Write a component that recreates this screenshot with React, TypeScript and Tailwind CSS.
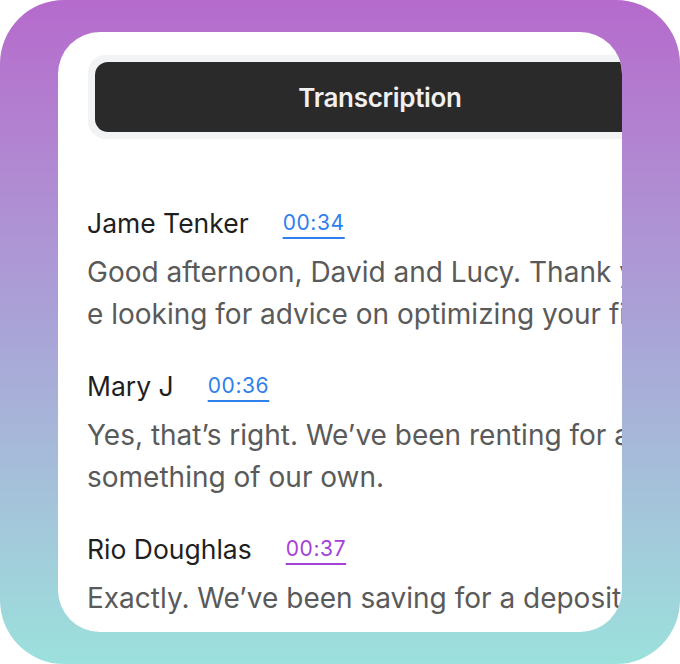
import React from "react";

type Entry = {
  name: string;
  time: string;
  timeClass: string;
  lines: string[];
};

const entries: Entry[] = [
  {
    name: "Jame Tenker",
    time: "00:34",
    timeClass: "text-[#2f80ed] decoration-[#2f80ed]",
    lines: [
      "Good afternoon, David and Lucy. Thank you for coming in today.",
      "e looking for advice on optimizing your finances and planning ahead.",
    ],
  },
  {
    name: "Mary J",
    time: "00:36",
    timeClass: "text-[#2f80ed] decoration-[#2f80ed]",
    lines: [
      "Yes, that\u2019s right. We\u2019ve been renting for a while now and want",
      "something of our own.",
    ],
  },
  {
    name: "Rio Doughlas",
    time: "00:37",
    timeClass: "text-[#a442d8] decoration-[#a442d8]",
    lines: ["Exactly. We\u2019ve been saving for a deposit for a couple of years."],
  },
];

export default function App() {
  return (
    <div className="w-[680px] h-[664px] bg-white">
      <div
        className="w-[680px] h-[664px] rounded-[64px] bg-gradient-to-b from-[#b56acc] via-[#a9a4d7] to-[#9be1dc] px-[58px] py-[32px]"
        style={{ fontFamily: "Inter, 'Noto Sans', sans-serif" }}
      >
        <div className="w-[564px] h-[600px] rounded-[42px] bg-white overflow-hidden">
          <div className="pt-[23px] pl-[30px]">
            <div className="w-[584px] shrink-0 rounded-[18px] bg-[#f1f3f5] p-[7px]">
              <div className="h-[70px] rounded-[13px] bg-[#2a2a2a] flex items-center justify-center">
                <span className="text-[26px] font-semibold text-[#f0f0f0] tracking-[-0.3px]">
                  Transcription
                </span>
              </div>
            </div>
          </div>
          <div className="pl-[29px] pt-[67px] flex flex-col gap-[34px]">
            {entries.map((e) => (
              <div key={e.name} className="flex flex-col">
                <div className="flex items-center gap-[34px] h-[34px] mb-[11px]">
                  <span className="text-[26.5px] leading-[34px] text-[#1f1f1f] whitespace-nowrap">
                    {e.name}
                  </span>
                  <span
                    className={`text-[21px] leading-[34px] tracking-[0.6px] underline decoration-2 underline-offset-[7px] whitespace-nowrap ${e.timeClass}`}
                  >
                    {e.time}
                  </span>
                </div>
                {e.lines.map((l, i) => (
                  <div
                    key={i}
                    className="text-[28px] leading-[42px] text-[#5a5a5a] whitespace-nowrap"
                  >
                    {l}
                  </div>
                ))}
              </div>
            ))}
          </div>
        </div>
      </div>
    </div>
  );
}
